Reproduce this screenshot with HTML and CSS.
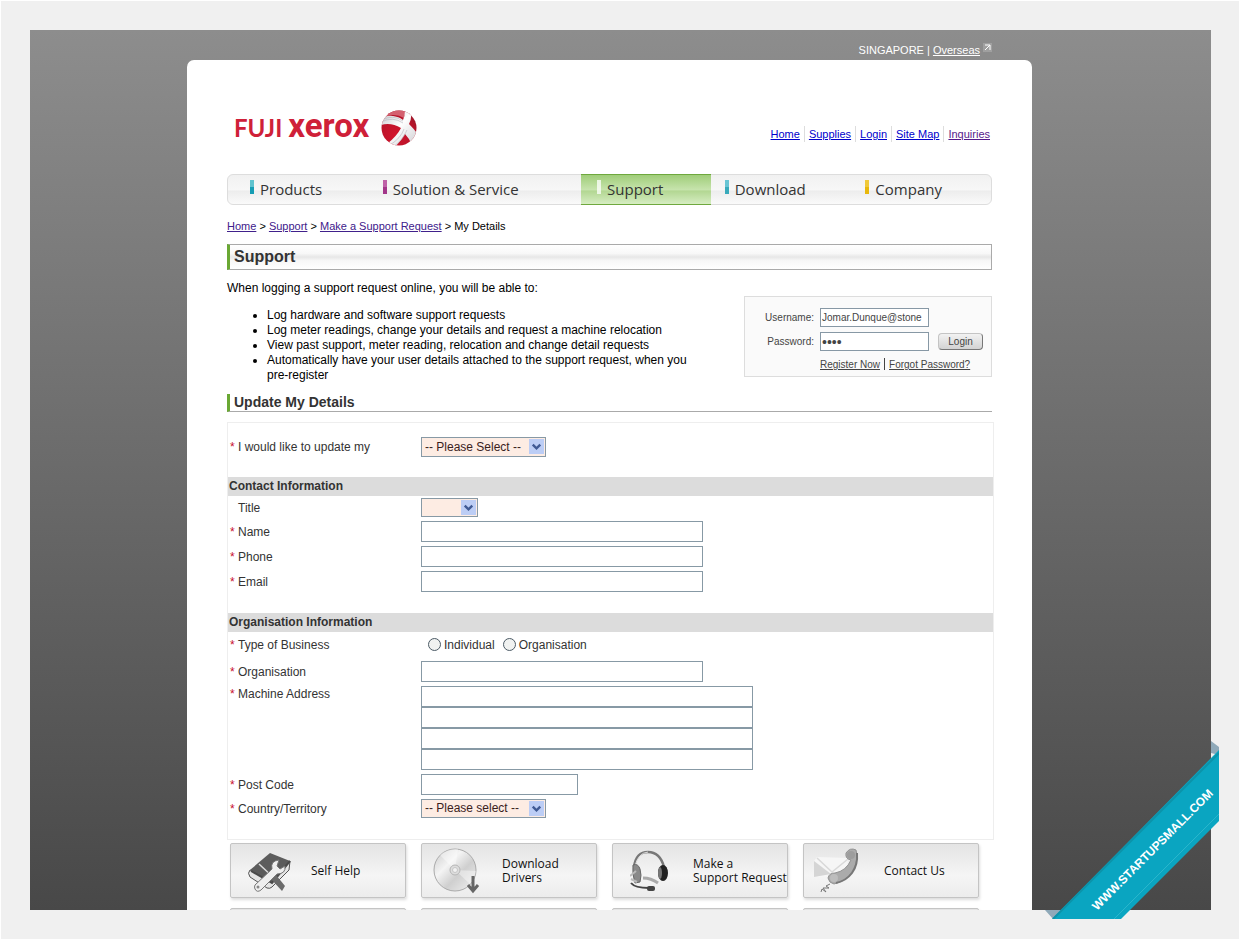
FILE: index.html
```html
<!DOCTYPE html>
<html lang="en">
<head>
<meta charset="utf-8">
<title>Fuji Xerox Support - Update My Details</title>
<link rel="stylesheet" href="styles.css">
</head>
<body>
<div class="frame">
  <div class="stage">
    <div class="topbar">
      <span>SINGAPORE | <a href="#">Overseas</a></span>
      <svg width="10" height="10" viewBox="0 0 10 10"><rect x="1" y="0" width="9" height="9" fill="#a0a0a0"/><path d="M3 2h5v5M8 2L3 7" fill="none" stroke="#fff" stroke-width="1"/></svg>
    </div>
    <main class="panel">
      <header class="header">
        <a class="logo" href="#" aria-label="Fuji Xerox">
          <span class="wordmark"><span class="logo-fuji">FUJI</span><span class="logo-xerox">xerox</span></span>
          <svg class="ball" width="36" height="36" viewBox="0 0 36 36">
            <defs>
              <radialGradient id="ball" cx=".4" cy=".7" r=".8"><stop offset="0" stop-color="#d3142c"/><stop offset=".7" stop-color="#b5142a"/><stop offset="1" stop-color="#8e1a2a"/></radialGradient>
              <linearGradient id="band" x1="0" y1="0" x2="1" y2="1"><stop offset="0" stop-color="#c4c4c8"/><stop offset=".45" stop-color="#fff"/><stop offset="1" stop-color="#c8c8cc"/></linearGradient>
              <clipPath id="disc"><circle cx="18" cy="18" r="17.500"/></clipPath>
            </defs>
            <g clip-path="url(#disc)">
              <rect width="36" height="36" fill="url(#ball)"/>
              <path d="M6 4Q16-3 25 1L23 8Q15 3 6 6z" fill="#d4606f"/>
              <path d="M0 9Q5 5 12 6Q19 7 22 10Q24 6 24 0L30 2Q31 8 28 14Q34 20 38 26L31 35Q28 28 24 24Q20 31 13 38L6 34Q16 26 20 18Q10 12 0 15z" fill="url(#band)"/>
              <path d="M0 12Q12 6 22 13M23 19Q20 28 9 35M26 20Q22 30 12 37M1 10Q12 4 22 11" fill="none" stroke="#b5b5bc" stroke-width=".6"/>
            </g>
          </svg>
        </a>
        <nav class="links" aria-label="Quick links">
          <a href="#">Home</a><a href="#">Supplies</a><a href="#">Login</a><a href="#">Site Map</a><a class="visited" href="#">Inquiries</a>
        </nav>
      </header>

      <nav class="mainnav" aria-label="Main">
        <a class="teal" href="#">Products</a>
        <a class="plum" href="#">Solution &amp; Service</a>
        <a class="active" href="#">Support</a>
        <a class="sky" href="#">Download</a>
        <a class="gold" href="#">Company</a>
      </nav>

      <nav class="crumbs" aria-label="Breadcrumb">
        <a href="#">Home</a> &gt; <a href="#">Support</a> &gt; <a href="#">Make a Support Request</a> &gt; My Details
      </nav>

      <h1 class="title">Support</h1>

      <section class="intro">
        <div class="intro-text">
          <p>When logging a support request online, you will be able to:</p>
          <ul>
            <li>Log hardware and software support requests</li>
            <li>Log meter readings, change your details and request a machine relocation</li>
            <li>View past support, meter reading, relocation and change detail requests</li>
            <li>Automatically have your user details attached to the support request, when you pre-register</li>
          </ul>
        </div>
        <form class="login">
          <label for="user">Username:</label>
          <input id="user" type="text" value="Jomar.Dunque@stone">
          <span></span>
          <label for="pass">Password:</label>
          <input id="pass" type="password" value="abcd">
          <button type="button">Login</button>
          <div class="login-links"><a href="#">Register Now</a><i></i><a href="#">Forgot Password?</a></div>
        </form>
      </section>

      <h2 class="subtitle">Update My Details</h2>

      <form class="details">
        <div class="row first">
          <label class="req" for="what">I would like to update my</label>
          <span class="pick wide"><select id="what"><option>-- Please Select --</option></select><svg viewBox="0 0 16 16"><path d="M4 6l4 4 4-4" /></svg></span>
        </div>
        <h3>Contact Information</h3>
        <div class="rows">
          <div class="row"><label for="title">Title</label>
            <span class="pick narrow"><select id="title"><option></option></select><svg viewBox="0 0 16 16"><path d="M4 6l4 4 4-4" /></svg></span></div>
          <div class="row"><label class="req" for="name">Name</label><input class="mid" id="name" type="text"></div>
          <div class="row"><label class="req" for="phone">Phone</label><input class="mid" id="phone" type="text"></div>
          <div class="row"><label class="req" for="email">Email</label><input class="mid" id="email" type="text"></div>
        </div>
        <h3 class="second">Organisation Information</h3>
        <div class="rows">
          <div class="row business"><span class="label req">Type of Business</span>
            <div class="radios">
              <label><input type="radio" name="biz">Individual</label>
              <label><input type="radio" name="biz">Organisation</label>
            </div></div>
          <div class="row"><label class="req" for="org">Organisation</label><input class="mid" id="org" type="text"></div>
          <div class="row top"><label class="req" for="addr1">Machine Address</label>
            <div class="address">
              <input id="addr1" type="text">
              <input type="text" aria-label="Machine Address line 2">
              <input type="text" aria-label="Machine Address line 3">
              <input type="text" aria-label="Machine Address line 4">
            </div></div>
          <div class="row"><label class="req" for="post">Post Code</label><input class="short" id="post" type="text"></div>
          <div class="row"><label class="req" for="country">Country/Territory</label>
            <span class="pick wide"><select id="country"><option>-- Please select --</option></select><svg viewBox="0 0 16 16"><path d="M4 6l4 4 4-4" /></svg></span></div>
        </div>
      </form>

      <div class="cards">
        <a class="card" href="#">
          <svg viewBox="0 0 50 50" width="50" height="50">
            <path d="M2 23L22 6 42 14 24 36z" fill="#5c5c5c"/>
            <path d="M2 23q-3 3 0 7l17 11q3 1 5-1l17-17 1-9-18 21z" fill="#e6e6e6" stroke="#555" stroke-width="1"/>
            <path d="M3 24L24 36 42 14" fill="none" stroke="#4b4b4b" stroke-width="2"/>
            <path d="M11 17l16 15" stroke="#ddd" stroke-width="1.500"/>
            <path d="M23 32l5-4 9 11-3 5z" fill="#6b6b6b"/>
            <path d="M7 38L24 22q-2-8 7-9l-2 6 3 3 5-3q1 8-8 8L13 43q-4 3-6-1-1-2 0-4z" fill="#efefef" stroke="#777" stroke-width="1"/>
            <circle cx="10" cy="40" r="1.500" fill="#888"/>
          </svg>
          <span>Self Help</span>
        </a>
        <a class="card" href="#">
          <svg viewBox="0 0 50 50" width="50" height="50">
            <defs><linearGradient id="cd" x1="0" y1="0" x2="1" y2="1"><stop offset="0" stop-color="#c8c8c8"/><stop offset=".35" stop-color="#f4f4f4"/><stop offset=".6" stop-color="#cfcfcf"/><stop offset="1" stop-color="#f2f2f2"/></linearGradient></defs>
            <circle cx="24" cy="24" r="21" fill="url(#cd)" stroke="#aaa"/>
            <path d="M24 24L9 9Q17 2 27 3zM24 24l15 14q5-6 6-13z" fill="#fff" opacity=".4"/>
            <circle cx="24" cy="24" r="5" fill="#ddd" stroke="#b5b5b5"/><circle cx="24" cy="24" r="2.500" fill="#f2f2f2" stroke="#c5c5c5"/>
            <path d="M42 30v14M37 39l5 6 5-6" fill="none" stroke="#666" stroke-width="3"/>
          </svg>
          <span>Download<br>Drivers</span>
        </a>
        <a class="card" href="#">
          <svg viewBox="0 0 50 50" width="50" height="50">
            <path d="M4 20Q6 5 18 5T34 20" fill="none" stroke="#777" stroke-width="2.500"/>
            <path d="M5 19Q8 6 18 5" fill="none" stroke="#ddd" stroke-width="1"/>
            <ellipse cx="33" cy="26" rx="5" ry="8" fill="#222"/><ellipse cx="30" cy="26" rx="2" ry="6" fill="#777"/>
            <path d="M3 18q5-2 7 4t0 13l-5 1q-3-9-2-18z" fill="#8a8a8a" stroke="#666"/>
            <path d="M0 29l6-5M1 32l6 3" stroke="#bbb" stroke-width="2"/>
            <path d="M13 31q8 0 15 5" fill="none" stroke="#aaa" stroke-width="3"/>
            <path d="M1 36q4 5 18 5" fill="none" stroke="#444" stroke-width="2"/>
            <rect x="17" y="39" width="8" height="5" rx="2" fill="#444"/>
          </svg>
          <span>Make a<br>Support Request</span>
        </a>
        <a class="card" href="#">
          <svg viewBox="0 0 50 50" width="50" height="50">
            <path d="M1 15l3-4 31 1-1 18-33 1z" fill="#f6f6f6"/><path d="M1 15l17 13-17 3z" fill="#d5d5d5"/><path d="M4 12l15 14 16-13" fill="none" stroke="#d9d9d9" stroke-width="1.500"/>
            <path d="M33 7q4-6 10-3 3 9-3 20T21 38q-5-1-6-6 1-5 7-5 11-2 16-13-6-1-5-7z" fill="#ababab" stroke="#939393"/>
            <path d="M44 7q1 12-5 20T23 37" fill="none" stroke="#777" stroke-width="2"/>
            <circle cx="38" cy="9" r="4" fill="#9d9d9d"/><circle cx="21" cy="32" r="4" fill="#bdbdbd"/>
            <path d="M17 38l-4 2 3 2-6 0 3 4-4-3-1 3" fill="none" stroke="#777"/>
          </svg>
          <span>Contact Us</span>
        </a>
        <div class="card"></div><div class="card"></div><div class="card"></div><div class="card"></div>
      </div>
    </main>
  </div>
  <svg class="ribbon" width="176" height="178" viewBox="0 0 176 178">
    <path d="M168 0l8 6v8l-8-2zM2 169h16l-8 9z" fill="#8fa9b9"/>
    <path d="M176 9v71l-98 98H9z" fill="#0aa5c1"/>
    <path d="M176 12L10 178" stroke="#0b93aa" stroke-width="2"/>
    <path d="M176 73L71 178" stroke="#2bb5cc" stroke-width="1"/>
    <text transform="translate(54 170) rotate(-45)">WWW.STARTUPSMALL.COM</text>
  </svg>
</div>
</body>
</html>
```
FILE: styles.css
```css
* { box-sizing: border-box; }
body {
  margin: 0;
  height: 100vh;
  padding: 1px;
  background: #fff;
  color: #000;
  font: 12px/15px "Liberation Sans", Arial, sans-serif;
}
h1, h2, h3, p, ul { margin: 0; }
input, select, button { font: inherit; color: inherit; margin: 0; }

.frame {
  position: relative;
  height: 100%;
  padding: 29px 28px 29px 29px;
  background: #f0f0f0;
}
.stage {
  height: 100%;
  overflow: hidden;
  padding: 0 22px 0 0;
  background: linear-gradient(#8d8d8d, #484848);
}
.topbar {
  display: flex;
  justify-content: flex-end;
  gap: 2px;
  max-width: 845px;
  height: 30px;
  margin: 0 auto;
  padding: 13px 40px 0 0;
  color: #fff;
  font-size: 11px;
}
.topbar a { color: #fff; }

.panel {
  max-width: 845px;
  margin: 0 auto;
  padding: 0 40px;
  background: #fff;
  border-radius: 7px 7px 0 0;
}
.header {
  display: flex;
  justify-content: space-between;
  height: 114px;
  padding-top: 50px;
}
.logo {
  display: flex;
  height: 36px;
  padding-left: 7px;
  color: #cf2038;
  font-weight: bold;
  text-decoration: none;
}
.wordmark { display: flex; align-items: baseline; width: 138px; line-height: 32px; }
.logo-fuji { font-family: Lato, sans-serif; font-size: 24px; }
.logo-xerox { margin-left: 6px; font-family: Roboto, sans-serif; font-size: 33px; }
.ball { margin-left: 9px; }
.links { display: flex; padding-top: 16px; font-size: 11px; }
.links a { height: 16px; margin-right: 4px; color: #00c; line-height: 17px; }
.links a + a { padding-left: 4px; border-left: 1px solid #ddd; }
.links a:last-child { margin-right: 2px; }
.links .visited { color: #551a8b; }

.mainnav {
  display: grid;
  grid-template-columns: 133fr 221fr 130fr 141fr 140fr;
  height: 31px;
  border: 1px solid #ddd;
  border-radius: 6px;
  background: linear-gradient(#f1f1f1, #f7f7f7 50%, #ededed 56%, #fafafa);
  font: 15px/29px "Open Sans", "Noto Sans", sans-serif;
}
.mainnav a {
  display: flex;
  gap: 6px;
  padding-left: 14px;
  color: #333;
  text-decoration: none;
}
.mainnav a::before { content: ""; width: 4px; height: 14px; margin-top: 5px; background: #fff; }
.mainnav .teal, .mainnav .plum { padding-left: 22px; }
.mainnav .teal::before { background: linear-gradient(#5fc3cf 50%, #169db4 50%); }
.mainnav .plum::before { background: linear-gradient(#bf62a8 50%, #a23689 50%); }
.mainnav .sky::before { background: linear-gradient(#69c5d4 50%, #38aabb 50%); }
.mainnav .gold::before { background: linear-gradient(#f0c93a 50%, #e8b80c 50%); }
.mainnav .active {
  margin: -1px 0;
  padding-left: 16px;
  border: solid #6fa83e;
  border-width: 1px 0;
  background: linear-gradient(#a0cd79, #c6e3ac 50%, #b3d793 56%, #d6edc2);
}
.mainnav .active::before { opacity: .75; }

.crumbs { margin-top: 14px; font-size: 11px; }
.crumbs a { color: #40208b; }

.title {
  height: 26px;
  margin-top: 10px;
  padding-left: 4px;
  border: 1px solid #aaa;
  border-left: 3px solid #6aa834;
  background: linear-gradient(#fff, #f8f8f8 35%, #e7e7e7 50%, #f7f7f7 65%, #fff);
  color: #333;
  font-size: 16px;
  line-height: 24px;
}
.intro { display: flex; justify-content: space-between; padding-top: 11px; }
.intro-text { flex: 1; }
.intro ul { margin-top: 12px; padding: 0 40px; }
.login {
  display: grid;
  grid-template-columns: 69px 109px auto;
  gap: 5px 6px;
  align-items: center;
  align-content: start;
  width: 248px;
  height: 81px;
  margin-top: 15px;
  padding-top: 11px;
  border: 1px solid #ddd;
  background: #fafafa;
  color: #444;
  font-size: 10px;
}
.login label { text-align: right; }
.login input { width: 109px; height: 19px; padding: 0 1px; border: 1px solid #8798a5; background: #fff; }
.login #pass { font-size: 14px; }
.login button {
  width: 45px;
  height: 17px;
  margin-left: 3px;
  padding: 0;
  border: 1px solid #aaa;
  border-color: #c4c4c4 #777 #777 #c4c4c4;
  border-radius: 4px;
  background: linear-gradient(#f2f2f2, #d3d3d3);
  line-height: 13px;
}
.login-links { grid-column: 2 / 4; display: flex; gap: 4px; line-height: 17px; }
.login-links a { color: #444; }
.login-links i { width: 1px; height: 12px; margin-top: 2px; background: #444; }

.subtitle {
  height: 18px;
  margin-top: 11px;
  padding-left: 4px;
  border-left: 3px solid #6aa834;
  border-bottom: 1px solid #aaa;
  color: #333;
  font-size: 14px;
  line-height: 17px;
}

.details {
  margin: 10px -2px 0 0;
  padding-bottom: 21px;
  border: 1px solid #eee;
  color: #333;
}
.details h3 {
  padding-left: 1px;
  background: #dcdcdc;
  color: #333;
  font-size: 12px;
  line-height: 19px;
}
.rows { display: flex; flex-direction: column; gap: 4px; padding-top: 2px; }
.row { display: grid; grid-template-columns: 193px 1fr; align-items: center; line-height: 17px; }
.row > label, .row > .label { padding-left: 10px; }
.rows .row:not(.top) > label { padding-top: 2px; }
.row > .req { padding-left: 2px; }
.req::before { content: "*"; display: inline-block; width: 8px; color: #c8102e; }
.row.first { margin: 14px 0 20px; }
.row.top { align-items: start; }
.row.business { height: 23px; }
.details .second { margin-top: 21px; }
.details input[type="text"] { display: block; height: 21px; padding: 0 3px; border: 1px solid #8799a5; background: #fff; }
.mid { width: 282px; }
.short { width: 157px; }
.address input { width: 332px; }
.radios { display: flex; gap: 8px; padding-left: 7px; }
.radios label { display: flex; gap: 3px; line-height: 21px; }
.radios input {
  appearance: none;
  width: 13px;
  height: 13px;
  margin-top: 3px;
  border: 1px solid #4c5b66;
  border-radius: 50%;
  background: #f0f2f1;
}
.pick { position: relative; height: 19px; }
.pick.wide { width: 125px; }
.pick.narrow { width: 57px; }
.first .pick { height: 20px; }
.pick select {
  display: block;
  appearance: none;
  width: 100%;
  height: 100%;
  padding: 0 3px;
  border: 1px solid #8799a5;
  border-radius: 0;
  background: #fdece3;
  color: #3a211c;
}
.pick svg { position: absolute; top: 2px; right: 2px; width: 15px; height: 15px; background: #bccdf5; pointer-events: none; }
.pick path { fill: none; stroke: #405a94; stroke-width: 2.5; }

.cards { display: grid; grid-template-columns: repeat(4, 176px); gap: 10px 15px; padding: 3px 0 0 3px; }
.card {
  display: grid;
  grid-template-columns: 63px 1fr;
  align-items: center;
  height: 55px;
  padding-left: 17px;
  border: 1px solid #c4c4c4;
  border-radius: 2px;
  background: linear-gradient(#e4e4e4, #f5f5f5 60%, #ececec);
  box-shadow: 1px 2px 3px #ddd;
  color: #111;
  font: 12px/14px "Open Sans", "Noto Sans", sans-serif;
  text-decoration: none;
  white-space: nowrap;
}
.card svg { margin-top: 3px; }
.card:nth-child(2) svg, .card:nth-child(4) svg { margin: 0 0 0 -8px; }

.ribbon { position: absolute; right: 20px; bottom: 20px; }
.ribbon text { fill: #fff; font: bold 12px "Liberation Sans", Arial, sans-serif; }
```
